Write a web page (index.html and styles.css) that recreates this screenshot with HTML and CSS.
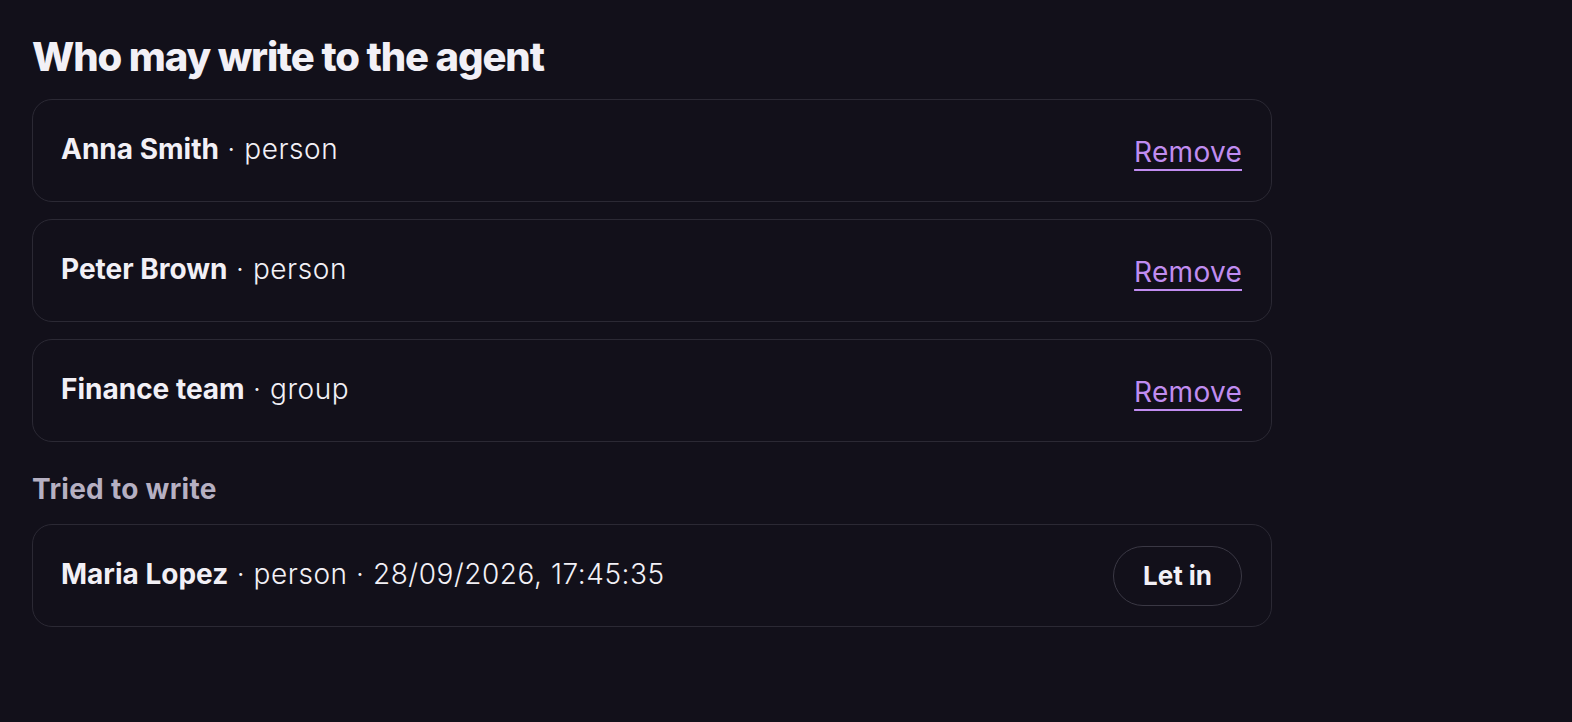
FILE: index.html
```html
<!DOCTYPE html>
<html lang="en">
<head>
<meta charset="utf-8">
<title>Who may write to the agent</title>
<link rel="stylesheet" href="styles.css">
</head>
<body>
<main class="page">
  <h1 class="title">Who may write to the agent</h1>
  <ul class="list">
    <li class="card">
      <span class="label"><b class="name">Anna Smith</b> · person</span>
      <a class="remove" href="#">Remove</a>
    </li>
    <li class="card">
      <span class="label"><b class="name">Peter Brown</b> · person</span>
      <a class="remove" href="#">Remove</a>
    </li>
    <li class="card">
      <span class="label"><b class="name">Finance team</b> · group</span>
      <a class="remove" href="#">Remove</a>
    </li>
  </ul>
  <h2 class="subtitle">Tried to write</h2>
  <ul class="list">
    <li class="card">
      <span class="label"><b class="name">Maria Lopez</b> · person · 28/09/2026, 17:45:35</span>
      <button class="letin" type="button">Let in</button>
    </li>
  </ul>
</main>
</body>
</html>
```
FILE: styles.css
```css
html, body {
  margin: 0;
  padding: 0;
  background: #12101a;
}
body {
  font-family: Inter, "Noto Sans", sans-serif;
  color: #f2f0f6;
}
.page {
  padding: 33px 0 0 32px;
  width: 1240px;
}
.title {
  margin: 0 0 18px;
  font-size: 40px;
  line-height: 48px;
  font-weight: 800;
  letter-spacing: -0.028em;
  color: #f2f0f6;
}
.list {
  list-style: none;
  margin: 0;
  padding: 0;
  display: flex;
  flex-direction: column;
  gap: 17px;
}
.card {
  box-sizing: border-box;
  height: 103px;
  border: 1.5px solid #2b2934;
  border-radius: 20px;
  display: flex;
  align-items: center;
  justify-content: space-between;
  padding: 0 29px 0 28px;
}
.label {
  font-size: 28px;
  line-height: 36px;
  font-weight: 300;
  letter-spacing: 0.02em;
  margin-top: -3px;
}
.name {
  font-weight: 700;
  letter-spacing: 0;
}
.remove {
  font-size: 28px;
  line-height: 36px;
  color: #c08cf0;
  text-decoration: underline;
  text-decoration-thickness: 2px;
  text-underline-offset: 7px;
  font-weight: 400;
  letter-spacing: 0.01em;
  margin-top: 2px;
}
.subtitle {
  margin: 29px 0 17px;
  font-size: 28px;
  line-height: 36px;
  font-weight: 700;
  letter-spacing: 0.01em;
  color: #b6b0c2;
}
.letin {
  font-family: inherit;
  box-sizing: border-box;
  width: 129px;
  height: 60px;
  border: 1.5px solid #3a3844;
  border-radius: 30px;
  background: transparent;
  color: #f2f0f6;
  font-size: 26px;
  font-weight: 700;
  letter-spacing: 0;
  padding: 0;
}
```
